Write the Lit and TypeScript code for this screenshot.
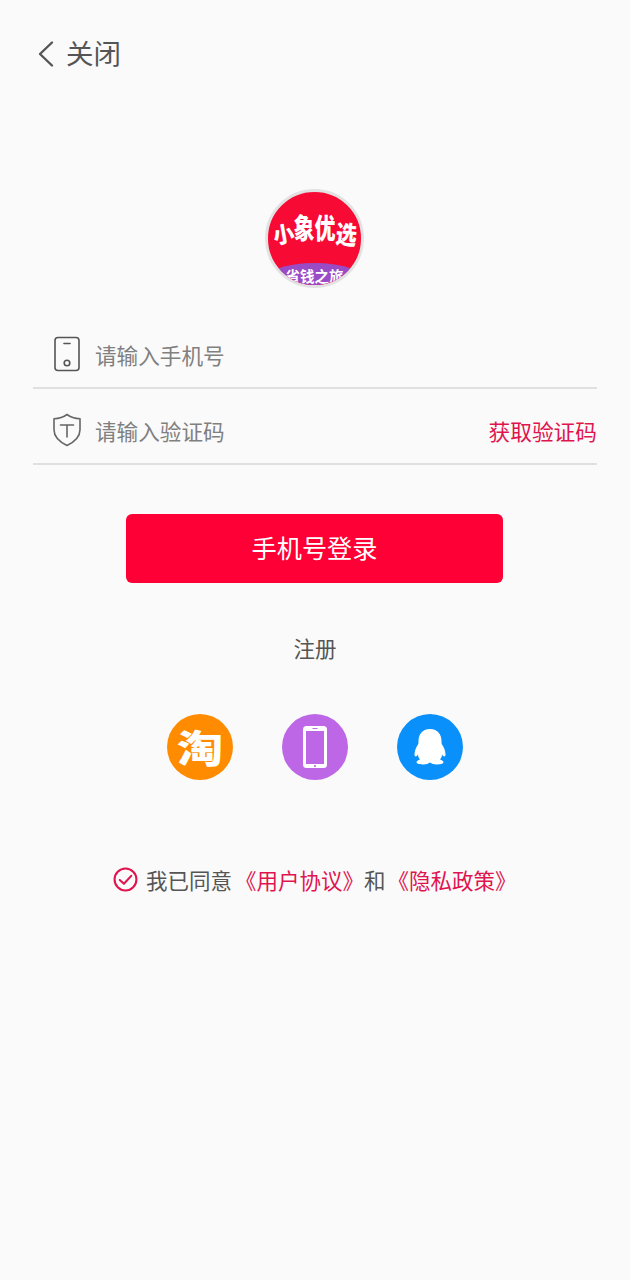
import { LitElement, html, css } from "lit";
import { customElement } from "lit/decorators.js";

@customElement("app-root")
export class AppRoot extends LitElement {
  static styles = css`
    :host {
      display: block;
      width: 630px;
      height: 1280px;
      background: #fafafa;
      font-family: "Noto Sans CJK SC", "Noto Sans", sans-serif;
      color: #555;
      overflow: hidden;
      text-spacing-trim: space-all;
    }
    .header {
      display: flex;
      align-items: center;
      height: 54px;
      padding: 27px 0 0 37px;
      gap: 11px;
      font-size: 27.5px;
      line-height: 54px;
      color: #555;
    }
    .header span { position: relative; top: -2px; }
    .header svg { display: block; }
    .logo-wrap { display: flex; justify-content: center; padding-top: 108px; }
    .logo {
      position: relative;
      width: 93px;
      height: 93px;
      border: 3px solid #e2e2e2;
      border-radius: 50%;
      background: #f70a34;
      overflow: hidden;
      margin-left: -1px;
    }
    .logo-title {
      position: absolute;
      left: 0;
      right: 0;
      top: 21px;
      display: flex;
      justify-content: center;
      color: #fff;
      font-size: 21px;
      font-weight: 900;
      line-height: 30px;
      white-space: nowrap;
    }
    .logo-title span { display: block; }
    .c1 { transform: translateY(5px) rotate(-10deg) scaleY(1.05); }
    .c2 { transform: translateY(-1px) scaleY(1.35); }
    .c3 { transform: translateY(-1px) scaleY(1.35); }
    .c4 { transform: translateY(5px) rotate(6deg) scaleY(1.2); }
    .logo-band {
      position: absolute;
      left: -6px;
      right: -6px;
      bottom: -16px;
      height: 38px;
      border-radius: 50%;
      background: #9a4cc6;
      color: #fff;
      font-size: 14.5px;
      font-weight: 700;
      line-height: 26px;
      text-align: center;
      white-space: nowrap;
    }
    .form { margin: 25px 33px 0; }
    .row {
      display: flex;
      align-items: center;
      box-sizing: border-box;
      height: 76px;
      padding-top: 8px;
      border-bottom: 2px solid #e0e0e0;
      font-size: 21.6px;
      color: #808080;
    }
    .row svg { display: block; }
    .ico { width: 63px; display: flex; justify-content: center; padding-left: 5px; box-sizing: border-box; flex: none; }
    .ph { flex: 1; margin-left: -1px; }
    .code { color: #e0144f; font-size: 21.7px; }
    .btn {
      margin: 49px 0 0 126px;
      width: 377px;
      height: 69px;
      padding-bottom: 3px;
      box-sizing: border-box;
      border-radius: 6px;
      background: #ff0036;
      color: #fff;
      font-size: 25.2px;
      display: flex;
      align-items: center;
      justify-content: center;
    }
    .reg { margin-top: 49px; text-align: center; font-size: 21.5px; line-height: 32px; color: #555; }
    .social { display: flex; justify-content: center; gap: 49px; margin-top: 50px; }
    .social svg { display: block; }
    .agree {
      display: flex;
      align-items: center;
      margin-top: 83px;
      padding-left: 113px;
      height: 32px;
      font-size: 21.5px;
      color: #555;
      white-space: nowrap;
    }
    .agree svg { margin-right: 8px; flex: none; }
    .link { color: #e0144f; margin-left: 3px; }
    .link + span + .link { margin-left: 2px; }
    .tao { width: 66px; height: 66px; border-radius: 50%; background: #ff8c00; overflow: hidden; display: flex; align-items: center; justify-content: center; }
    .tao span { color: #fff; font-size: 46px; font-weight: 900; line-height: 46px; transform: translateY(-1px) scaleY(0.82); display: block; }
  `;

  render() {
    return html`
      <div class="header">
        <svg width="18" height="28" viewBox="0 0 18 28" fill="none" stroke="#555" stroke-width="2.4" stroke-linecap="round" stroke-linejoin="round"><path d="M15 2.500 3 14l12 11.500"/></svg>
        <span>关闭</span>
      </div>
      <div class="logo-wrap">
        <div class="logo">
          <div class="logo-title"><span class="c1">小</span><span class="c2">象</span><span class="c3">优</span><span class="c4">选</span></div>
          <div class="logo-band">省钱之旅</div>
        </div>
      </div>
      <div class="form">
        <div class="row">
          <div class="ico">
            <svg width="28" height="36" viewBox="0 0 28 36" fill="none" stroke="#555" stroke-width="1.6"><rect x="2" y="1.500" width="24" height="33" rx="3"/><path d="M11 7.500h6" stroke-linecap="round"/><circle cx="14" cy="27" r="2.800"/></svg>
          </div>
          <div class="ph">请输入手机号</div>
        </div>
        <div class="row">
          <div class="ico">
            <svg width="30" height="34" viewBox="0 0 30 34" fill="none" stroke="#666" stroke-width="1.6" stroke-linejoin="round" stroke-linecap="round"><path d="M15 1.500c3.500 2.600 8 4 13 4.300v11c0 7-5.300 12-13 15.700C7.300 28.800 2 23.800 2 16.800v-11c5-.3 9.500-1.700 13-4.300Z"/><path d="M8.500 12h13M15 12v12"/></svg>
          </div>
          <div class="ph">请输入验证码</div>
          <div class="code">获取验证码</div>
        </div>
      </div>
      <div class="btn">手机号登录</div>
      <div class="reg">注册</div>
      <div class="social">
        <div class="tao"><span>淘</span></div>
        <svg width="66" height="66" viewBox="0 0 66 66"><circle cx="33" cy="33" r="33" fill="#bd66e6"/><rect x="21" y="12" width="24" height="42" rx="3.500" fill="#fff"/><rect x="24" y="17" width="18" height="33" fill="#bd66e6"/><circle cx="33" cy="52" r="1.100" fill="#bd66e6"/><rect x="30.500" y="14" width="5" height="1" fill="#bd66e6"/></svg>
        <svg width="66" height="66" viewBox="0 0 66 66"><circle cx="33" cy="33" r="33" fill="#0a90fb"/><path fill="#fff" d="M33 15c8 0 11.500 6 11.500 12 0 1.500 0 2.500.5 3.500 2 3 3.500 6.500 3.500 10 0 2.500-2 2.500-3.500 0 0 2-.7 3.500-2 5 2 .8 3.500 1.500 3.500 2.800 0 1.700-4 2.200-7 2.200-2.500 0-5-.8-6.500-2-1.500 1.200-4 2-6.500 2-3 0-7-.5-7-2.200 0-1.300 1.500-2 3.500-2.800-1.300-1.500-2-3-2-5-1.500 2.500-3.500 2.500-3.500 0 0-3.500 1.500-7 3.500-10 .5-1 .5-2 .5-3.500C21.500 21 25 15 33 15Z"/></svg>
      </div>
      <div class="agree">
        <svg width="25" height="25" viewBox="0 0 24 24" fill="none" stroke="#e0144f" stroke-width="2" stroke-linecap="round" stroke-linejoin="round"><circle cx="12" cy="12" r="10.500"/><path d="M6.500 12.500 10.500 16 17.500 8.500"/></svg>
        <span>我已同意</span><span class="link">《用户协议》</span><span>和</span><span class="link">《隐私政策》</span>
      </div>
    `;
  }
}
